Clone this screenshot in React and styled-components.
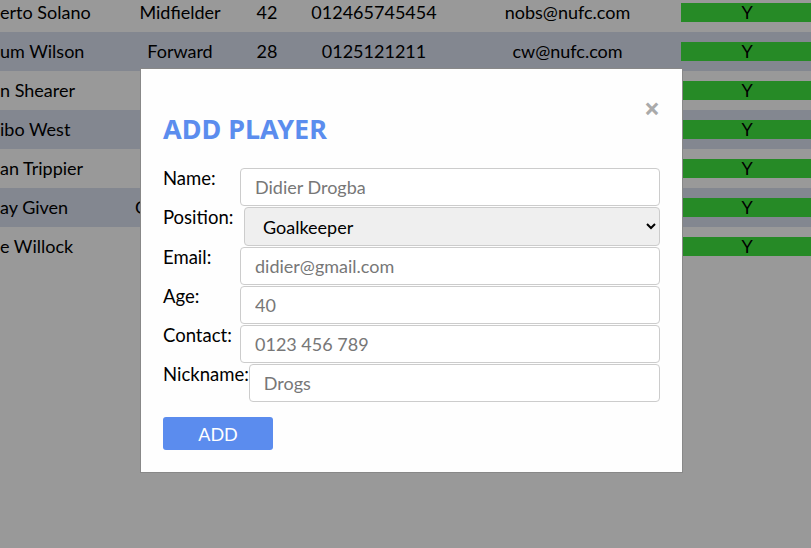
import React from "react";
import styled, { createGlobalStyle } from "styled-components";

const GlobalStyle = createGlobalStyle`
  html, body { margin: 0; padding: 0; overflow: hidden; background: #ffffff; }
  body { font-family: Lato, "Noto Sans", sans-serif; color: #000; }
  * { box-sizing: border-box; }
`;

const Page = styled.div`
  width: 811px;
  height: 548px;
  overflow: hidden;
`;

const Table = styled.div`
  margin-top: -7px;
  display: flex;
  flex-direction: column;
`;

const Row = styled.div`
  display: grid;
  grid-template-columns: 120px 120px 54px 160px 227px 132px;
  height: 39px;
  align-items: center;
  background: ${(p) => (p.$alt ? "#dae1f0" : "#ffffff")};
  font-size: 18px;
  white-space: nowrap;
`;

const Cell = styled.div`
  text-align: ${(p) => (p.$left ? "left" : "center")};
  padding-bottom: 2px;
`;

const Flag = styled.div`
  height: 19px;
  line-height: 18px;
  background: #40e640;
  text-align: center;
  color: #000;
`;

const Overlay = styled.div`
  position: fixed;
  inset: 0;
  background: rgba(0, 0, 0, 0.4);
  display: flex;
  align-items: flex-start;
`;

const Modal = styled.div`
  width: 543px;
  margin: 68px 0 0 140px;
  background: #fefefe;
  border: 1px solid #888;
  padding: 20px 22px 22px;
`;

const Close = styled.span`
  float: right;
  margin-top: 5px;
  font-family: "Noto Sans", sans-serif;
  font-size: 28px;
  line-height: 28px;
  font-weight: bold;
  color: #aaa;
  cursor: pointer;
`;

const Title = styled.h2`
  margin: 25px 0 24px;
  font-family: "Noto Sans", sans-serif;
  font-size: 27px;
  line-height: 30px;
  font-weight: bold;
  color: #5b8dee;
`;

const Form = styled.form`
  display: flex;
  flex-direction: column;
  gap: 1px;
`;

const FieldRow = styled.div`
  display: flex;
  align-items: flex-start;
`;

const Label = styled.label`
  min-width: 77px;
  font-size: 18.5px;
  line-height: 16px;
  padding-top: 2px;
  white-space: nowrap;
`;

const Input = styled.input`
  flex: 1;
  min-width: 0;
  height: 38px;
  border: 1px solid #ccc;
  border-radius: 4px;
  padding: 0 14px;
  font-family: inherit;
  font-size: 18px;
  color: #333;
  background: #fff;
  &::placeholder { color: #777; }
`;

const Select = styled.select`
  flex: 1;
  min-width: 0;
  height: 39px;
  margin-left: 4px;
  border: 1px solid #ccc;
  border-radius: 4px;
  padding: 0 10px 0 14px;
  font-family: inherit;
  font-size: 18px;
  color: #000;
  background: #efefef;
`;

const Button = styled.button`
  margin-top: 15px;
  width: 110px;
  height: 33px;
  border: none;
  border-radius: 3px;
  background: #5b8cee;
  color: #fff;
  font-family: inherit;
  font-size: 18px;
  cursor: pointer;
`;

const players = [
  ["erto Solano", "Midfielder", "42", "012465745454", "nobs@nufc.com"],
  ["um Wilson", "Forward", "28", "0125121211", "cw@nufc.com"],
  ["n Shearer", "", "", "", ""],
  ["ibo West", "", "", "", ""],
  ["an Trippier", "", "", "", ""],
  ["ay Given", "Goalkeeper", "", "", ""],
  ["e Willock", "Midfielder", "", "", ""],
];

export default function App() {
  return (
    <>
      <GlobalStyle />
      <Page>
        <Table>
          {players.map((p, i) => (
            <Row key={i} $alt={i % 2 === 1}>
              <Cell $left>{p[0]}</Cell>
              <Cell>{p[1]}</Cell>
              <Cell>{p[2]}</Cell>
              <Cell>{p[3]}</Cell>
              <Cell>{p[4]}</Cell>
              <Flag>Y</Flag>
            </Row>
          ))}
        </Table>
        <Overlay>
          <Modal>
            <Close>×</Close>
            <Title>ADD PLAYER</Title>
            <Form onSubmit={(e) => e.preventDefault()}>
              <FieldRow>
                <Label>Name:</Label>
                <Input placeholder="Didier Drogba" />
              </FieldRow>
              <FieldRow>
                <Label>Position:</Label>
                <Select defaultValue="Goalkeeper">
                  <option>Goalkeeper</option>
                  <option>Defender</option>
                  <option>Midfielder</option>
                  <option>Forward</option>
                </Select>
              </FieldRow>
              <FieldRow>
                <Label>Email:</Label>
                <Input placeholder="didier@gmail.com" />
              </FieldRow>
              <FieldRow>
                <Label>Age:</Label>
                <Input placeholder="40" />
              </FieldRow>
              <FieldRow>
                <Label>Contact:</Label>
                <Input placeholder="0123 456 789" />
              </FieldRow>
              <FieldRow>
                <Label>Nickname:</Label>
                <Input placeholder="Drogs" />
              </FieldRow>
            </Form>
            <Button type="button">ADD</Button>
          </Modal>
        </Overlay>
      </Page>
    </>
  );
}
